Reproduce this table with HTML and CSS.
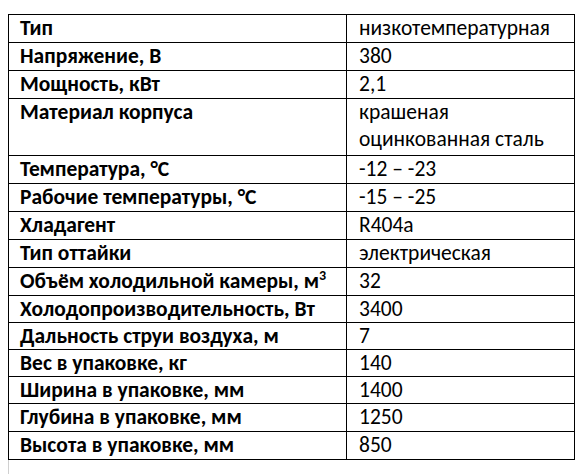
FILE: index.html
```html
<!DOCTYPE html>
<html lang="ru">
<head>
<meta charset="utf-8">
<link rel="stylesheet" href="styles.css">
</head>
<body>
<table class="spec">
  <tr><td class="k">Тип</td><td class="v">низкотемпературная</td></tr>
  <tr><td class="k">Напряжение, В</td><td class="v">380</td></tr>
  <tr><td class="k">Мощность, кВт</td><td class="v">2,1</td></tr>
  <tr class="dbl"><td class="k">Материал корпуса</td><td class="v">крашеная<br>оцинкованная сталь</td></tr>
  <tr><td class="k">Температура, °С</td><td class="v">-12 – -23</td></tr>
  <tr><td class="k">Рабочие температуры, °С</td><td class="v">-15 – -25</td></tr>
  <tr><td class="k">Хладагент</td><td class="v">R404a</td></tr>
  <tr><td class="k">Тип оттайки</td><td class="v">электрическая</td></tr>
  <tr><td class="k">Объём холодильной камеры, м<sup>3</sup></td><td class="v">32</td></tr>
  <tr class="short"><td class="k">Холодопроизводительность, Вт</td><td class="v">3400</td></tr>
  <tr class="short"><td class="k">Дальность струи воздуха, м</td><td class="v">7</td></tr>
  <tr class="short"><td class="k">Вес в упаковке, кг</td><td class="v">140</td></tr>
  <tr class="short"><td class="k">Ширина в упаковке, мм</td><td class="v">1400</td></tr>
  <tr><td class="k">Глубина в упаковке, мм</td><td class="v">1250</td></tr>
  <tr><td class="k">Высота в упаковке, мм</td><td class="v">850</td></tr>
</table>
<div class="margin-mark"></div>
</body>
</html>
```
FILE: styles.css
```css
html, body {
  margin: 0;
  background: #ffffff;
}
body {
  padding: 14px 0 0 8px;
  font-family: Carlito, Lato, "Open Sans", sans-serif;
  font-size: 21.5px;
  color: #000000;
}
.spec {
  border-collapse: collapse;
  width: 567px;
  table-layout: fixed;
}
.spec td {
  border: 1px solid #000000;
  padding: 0;
  line-height: 27px;
  vertical-align: top;
  white-space: nowrap;
}
.spec .k {
  width: 326px;
  padding-left: 11px;
  font-weight: bold;
}
.spec .v {
  padding-left: 12px;
}
.spec .dbl td {
  padding-bottom: 2px;
}
.spec .short td {
  line-height: 26px;
}
.spec sup {
  font-size: 14px;
  line-height: 0;
  vertical-align: 8px;
}
.margin-mark {
  height: 20px;
  border-left: 1px solid #d0d0d0;
}
```
